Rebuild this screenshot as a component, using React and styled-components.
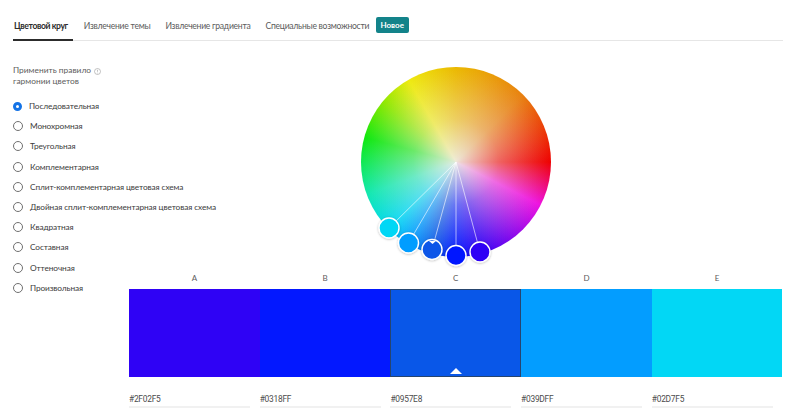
import React from 'react';
import styled, { createGlobalStyle } from 'styled-components';

const GlobalStyle = createGlobalStyle`
  html, body {
    margin: 0;
    padding: 0;
    background: #fff;
    font-family: Lato, Roboto, sans-serif;
  }
`;

const Page = styled.div`
  width: 800px;
  height: 413px;
  overflow: hidden;
  box-sizing: border-box;
  padding: 0 17.5px 0 13px;
`;

const Tabs = styled.div`
  display: flex;
  align-items: center;
  height: 41px;
  box-sizing: border-box;
  border-bottom: 1px solid #e6e6e6;
`;

const Tab = styled.div`
  height: 41px;
  box-sizing: border-box;
  padding: 0 ${(p) => (p.$first ? '5px' : p.$last ? '6.5px' : '15px')} 0 ${(p) => (p.$first ? '1px' : '0')};
  margin-right: ${(p) => (p.$first ? '11px' : '0')};
  line-height: 52px;
  font-size: 8.6px;
  letter-spacing: ${(p) => (p.$active ? '-0.38px' : '-0.27px')};
  white-space: nowrap;
  color: ${(p) => (p.$active ? '#2c2c2c' : '#5c5c5c')};
  font-weight: ${(p) => (p.$active ? 700 : 400)};
  border-bottom: 2px solid ${(p) => (p.$active ? '#2c2c2c' : 'transparent')};
`;

const Badge = styled.div`
  width: 33px;
  height: 16px;
  margin-top: 9px;
  border-radius: 2px;
  background: #13838a;
  color: #fff;
  font-size: 8px;
  font-weight: 700;
  line-height: 16px;
  text-align: center;
`;

const Body = styled.div`
  display: flex;
`;

const Sidebar = styled.div`
  width: 116px;
  flex: none;
  padding-top: 24px;
`;

const RuleHeading = styled.div`
  display: flex;
  align-items: flex-start;
  width: 88px;
  justify-content: space-between;
  font-size: 8.4px;
  line-height: 11px;
  color: #5c5c5c;
  margin-bottom: 9px;
`;

const InfoIcon = styled.svg`
  width: 7px;
  height: 7px;
  margin-top: 3px;
  flex: none;
`;

const RadioRow = styled.div`
  display: flex;
  align-items: center;
  height: 20.2px;
  white-space: nowrap;
  font-size: 8.3px;
  letter-spacing: -0.11px;
  color: #3c3c3c;
`;

const RadioDot = styled.span`
  width: ${(p) => (p.$checked ? '3px' : '8px')};
  height: ${(p) => (p.$checked ? '3px' : '8px')};
  flex: none;
  border-radius: 50%;
  margin-right: 7px;
  background: #fff;
  border: ${(p) => (p.$checked ? '3px solid #1473e6' : '1px solid #707070')};
`;

const Content = styled.div`
  flex: 1;
  display: flex;
  flex-direction: column;
  align-items: center;
  padding-top: 26px;
`;

const Wheel = styled.div`
  position: relative;
  width: 190px;
  height: 190px;
  flex: none;
  border-radius: 50%;
  background:
    radial-gradient(closest-side, rgba(238, 236, 228, 0.95) 0%, rgba(240, 236, 232, 0.42) 45%, rgba(255, 255, 255, 0) 100%),
    conic-gradient(
      #ebb800 0deg,
      #e8800f 45deg,
      #ee0000 90deg,
      #ee10e0 117deg,
      #2f02f5 165deg,
      #0318ff 180deg,
      #0957e8 195deg,
      #039dff 210deg,
      #02d7f5 225deg,
      #10e8b0 250deg,
      #0ee80e 285deg,
      #90e800 310deg,
      #eeea10 330deg,
      #ebb800 360deg
    );
`;

const Overlay = styled.svg`
  position: absolute;
  left: 0;
  top: 0;
  width: 190px;
  height: 190px;
  overflow: visible;
`;

const Swatches = styled.div`
  width: 100%;
  margin-top: 14px;
  display: grid;
  grid-template-columns: repeat(5, 1fr);
`;

const SwatchColumn = styled.div`
  display: flex;
  flex-direction: column;
`;

const SwatchLabel = styled.div`
  height: 18px;
  font-size: 8px;
  line-height: 15px;
  color: #5c5c5c;
  text-align: center;
`;

const SwatchColor = styled.div`
  position: relative;
  height: 88px;
  box-sizing: border-box;
  background: ${(p) => p.$color};
  border: 1px solid ${(p) => (p.$selected ? '#26456f' : p.$color)};
`;

const Arrow = styled.div`
  position: absolute;
  bottom: 2px;
  left: 50%;
  margin-left: -6px;
  width: 0;
  height: 0;
  border-left: 6px solid transparent;
  border-right: 6px solid transparent;
  border-bottom: 6px solid #fff;
`;

const HexField = styled.div`
  width: 121px;
  height: 18px;
  margin-top: 13px;
  box-sizing: border-box;
  border-bottom: 2px solid #f1f1f1;
  font-family: Roboto, sans-serif;
  font-size: 8.4px;
  letter-spacing: -0.25px;
  line-height: 18px;
  color: #4c4c4c;
`;

const tabs = ['Цветовой круг', 'Извлечение темы', 'Извлечение градиента', 'Специальные возможности'];

const rules = [
  'Последовательная',
  'Монохромная',
  'Треугольная',
  'Комплементарная',
  'Сплит-комплементарная цветовая схема',
  'Двойная сплит-комплементарная цветовая схема',
  'Квадратная',
  'Составная',
  'Оттеночная',
  'Произвольная',
];

const swatches = [
  { label: 'A', color: '#2F02F5' },
  { label: 'B', color: '#0318FF' },
  { label: 'C', color: '#0957E8', selected: true },
  { label: 'D', color: '#039DFF' },
  { label: 'E', color: '#02D7F5' },
];

// handle centres, relative to the wheel box; drawn in this order so B sits on top
const handles = [
  { color: '#02D7F5', x: 28, y: 161 },
  { color: '#039DFF', x: 47.5, y: 176 },
  { color: '#0957E8', x: 71, y: 182.5, base: true },
  { color: '#2F02F5', x: 119, y: 185 },
  { color: '#0318FF', x: 95, y: 188.5 },
];

const App = () => (
  <Page>
    <GlobalStyle />
    <Tabs>
      {tabs.map((t, i) => (
        <Tab key={t} $active={i === 0} $first={i === 0} $last={i === tabs.length - 1}>
          {t}
        </Tab>
      ))}
      <Badge>Новое</Badge>
    </Tabs>
    <Body>
      <Sidebar>
        <RuleHeading>
          <span>
            Применить правило
            <br />
            гармонии цветов
          </span>
          <InfoIcon viewBox="0 0 14 14" fill="none" stroke="#a8a8a8" strokeWidth="1.4">
            <circle cx="7" cy="7" r="6" />
            <path d="M7 3.5v4M7 9.5v1.4" />
          </InfoIcon>
        </RuleHeading>
        {rules.map((r, i) => (
          <RadioRow key={r}>
            <RadioDot $checked={i === 0} />
            {r}
          </RadioRow>
        ))}
      </Sidebar>
      <Content>
        <Wheel>
          <Overlay viewBox="0 0 190 190">
            <defs>
              <filter id="handleShadow" x="-30%" y="-30%" width="160%" height="160%">
                <feDropShadow dx="0" dy="0.5" stdDeviation="1" floodColor="#000" floodOpacity="0.3" />
              </filter>
            </defs>
            {handles.map((h) => (
              <line key={h.color} x1="95" y1="95" x2={h.x} y2={h.y} stroke="#fff" strokeOpacity="0.6" strokeWidth="1" />
            ))}
            {handles.map((h) => (
              <g key={h.color}>
                <circle cx={h.x} cy={h.y} r="10" fill={h.color} stroke="#fff" strokeWidth="1.4" filter="url(#handleShadow)" />
                {h.base && <path d={`M${h.x - 3} ${h.y - 8.6} L${h.x + 0.5} ${h.y - 5.6} L${h.x + 4} ${h.y - 8.6} Z`} fill="#fff" />}
              </g>
            ))}
          </Overlay>
        </Wheel>
        <Swatches>
          {swatches.map((s) => (
            <SwatchColumn key={s.label}>
              <SwatchLabel>{s.label}</SwatchLabel>
              <SwatchColor $color={s.color} $selected={s.selected}>
                {s.selected && <Arrow />}
              </SwatchColor>
              <HexField>{s.color}</HexField>
            </SwatchColumn>
          ))}
        </Swatches>
      </Content>
    </Body>
  </Page>
);

export default App;
